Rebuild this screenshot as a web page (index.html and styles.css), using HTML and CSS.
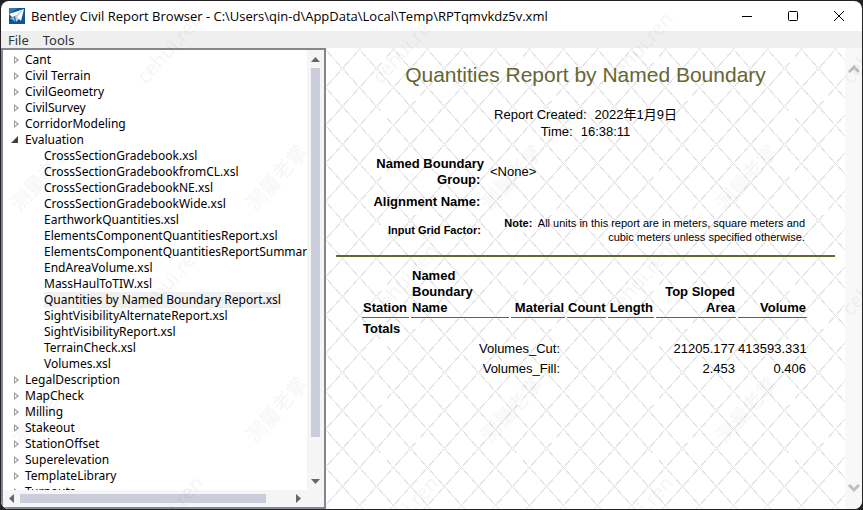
FILE: index.html
```
<!DOCTYPE html>
<html lang="en">
<head>
<meta charset="utf-8">
<title>Bentley Civil Report Browser</title>
<link rel="stylesheet" href="styles.css">
</head>
<body>
<div class="window">
  <header class="titlebar">
    <svg class="app-icon" viewBox="0 0 16 16" aria-hidden="true">
      <rect width="16" height="16" fill="#0d5596"/>
      <path d="M0 0h9L0 6z" fill="#2f7ab8"/>
      <path d="M15 1 0 6l3 3 4-1z" fill="#fff"/>
      <path d="M15 1 6 8l1 6 3-3z" fill="#b9d2e6"/>
      <path d="M15 1 8 9l4 4z" fill="#fff"/>
      <path d="M1 10l4-1 1 5-2-2z" fill="#9dc3df"/>
    </svg>
    <h1 class="caption">Bentley Civil Report Browser - C:\Users\qin-d\AppData\Local\Temp\RPTqmvkdz5v.xml</h1>
    <div class="controls">
      <button type="button" aria-label="Minimize"><svg viewBox="0 0 12 12"><path d="M1 6.500h10"/></svg></button>
      <button type="button" aria-label="Maximize"><svg viewBox="0 0 12 12"><rect x="1.500" y="1.500" width="9" height="9" rx="1"/></svg></button>
      <button type="button" aria-label="Close"><svg viewBox="0 0 12 12"><path d="M1 1l10 10M11 1 1 11"/></svg></button>
    </div>
  </header>
  <nav class="menubar">
    <button type="button">File</button>
    <button type="button">Tools</button>
  </nav>
  <div class="panes">
    <aside class="tree-pane">
      <div class="tree-view">
        <ul class="tree">
          <li><span class="twisty"></span>Cant</li>
          <li><span class="twisty"></span>Civil Terrain</li>
          <li><span class="twisty"></span>CivilGeometry</li>
          <li><span class="twisty"></span>CivilSurvey</li>
          <li><span class="twisty"></span>CorridorModeling</li>
          <li><span class="twisty open"></span>Evaluation
            <ul>
              <li>CrossSectionGradebook.xsl</li>
              <li>CrossSectionGradebookfromCL.xsl</li>
              <li>CrossSectionGradebookNE.xsl</li>
              <li>CrossSectionGradebookWide.xsl</li>
              <li>EarthworkQuantities.xsl</li>
              <li>ElementsComponentQuantitiesReport.xsl</li>
              <li>ElementsComponentQuantitiesReportSummary.xsl</li>
              <li>EndAreaVolume.xsl</li>
              <li>MassHaulToTIW.xsl</li>
              <li><span class="selected">Quantities by Named Boundary Report.xsl</span></li>
              <li>SightVisibilityAlternateReport.xsl</li>
              <li>SightVisibilityReport.xsl</li>
              <li>TerrainCheck.xsl</li>
              <li>Volumes.xsl</li>
            </ul>
          </li>
          <li><span class="twisty"></span>LegalDescription</li>
          <li><span class="twisty"></span>MapCheck</li>
          <li><span class="twisty"></span>Milling</li>
          <li><span class="twisty"></span>Stakeout</li>
          <li><span class="twisty"></span>StationOffset</li>
          <li><span class="twisty"></span>Superelevation</li>
          <li><span class="twisty"></span>TemplateLibrary</li>
          <li><span class="twisty"></span>Turnouts</li>
        </ul>
      </div>
      <div class="vbar">
        <svg viewBox="0 0 9 5"><path d="M0 5 4.500 0 9 5z"/></svg>
        <div class="track"><div class="thumb"></div></div>
        <svg viewBox="0 0 9 5"><path d="M0 0h9L4.500 5z"/></svg>
      </div>
      <div class="hbar">
        <svg viewBox="0 0 5 9"><path d="M5 0v9L0 4.500z"/></svg>
        <div class="track"><div class="thumb"></div></div>
        <svg viewBox="0 0 5 9"><path d="M0 0v9l5-4.500z"/></svg>
      </div>
    </aside>
    <main class="report-pane">
      <svg class="lattice" aria-hidden="true">
        <defs>
          <pattern id="cell" x="-1" y="1" width="34" height="38" patternUnits="userSpaceOnUse">
            <path d="M.5.5 34.500 38.500M34.500.5.5 38.500" fill="none" stroke="#e2e2e2" shape-rendering="crispEdges"/>
            <circle cx="17.500" cy="19.500" r="1.500" fill="#fff" stroke="#e2e2e2"/>
          </pattern>
          <pattern id="gaps" width="136" height="114" patternUnits="userSpaceOnUse">
            <path d="M53 7h8v8h-8zM86 45h8v8h-8zM53 63h8v8h-8z" fill="#fff"/>
          </pattern>
        </defs>
        <rect width="100%" height="100%" fill="url(#cell)"/>
        <rect width="100%" height="100%" fill="url(#gaps)"/>
      </svg>
      <article class="report">
        <h2>Quantities Report by Named Boundary</h2>
        <dl class="created">
          <div><dt>Report Created:</dt><dd>2022年1月9日</dd></div>
          <div><dt>Time:</dt><dd>16:38:11</dd></div>
        </dl>
        <dl class="facts">
          <dt>Named Boundary Group:&nbsp;</dt><dd>&lt;None&gt;</dd>
          <dt>Alignment Name:&nbsp;</dt><dd></dd>
          <dt class="small">Input Grid Factor:&nbsp;</dt>
          <dd class="note"><b>Note:</b> All units in this report are in meters, square meters and cubic meters unless specified otherwise.</dd>
        </dl>
        <hr>
        <table class="quantities">
          <colgroup><col class="c-station"><col class="c-name"><col class="c-material"><col class="c-count"><col class="c-length"><col class="c-area"><col class="c-volume"></colgroup>
          <thead>
            <tr><th class="left">Station</th><th class="left">Named<br>Boundary<br>Name</th><th>Material</th><th>Count</th><th>Length</th><th>Top Sloped Area</th><th>Volume</th></tr>
          </thead>
          <tbody>
            <tr><th class="left" colspan="7">Totals</th></tr>
            <tr><td class="item" colspan="3">Volumes_Cut:</td><td></td><td></td><td>21205.177</td><td>413593.331</td></tr>
            <tr><td class="item" colspan="3">Volumes_Fill:</td><td></td><td></td><td>2.453</td><td>0.406</td></tr>
          </tbody>
        </table>
      </article>
      <div class="page-bar">
        <svg viewBox="0 0 12 10"><path d="M1 8l5-5 5 5"/></svg>
        <svg viewBox="0 0 12 10"><path d="M1 2l5 5 5-5"/></svg>
      </div>
    </main>
  </div>
</div>
<svg class="watermark" aria-hidden="true">
  <defs>
    <pattern id="mark" width="235" height="232" patternUnits="userSpaceOnUse">
      <text transform="translate(146 85) rotate(-48)">cehui.ren</text>
      <text transform="translate(20 212) rotate(-48)">测量老掌</text>
    </pattern>
  </defs>
  <rect width="100%" height="100%" fill="url(#mark)"/>
</svg>
</body>
</html>
```
FILE: styles.css
```
* { box-sizing: border-box; }
html, body { height: 100%; margin: 0; }
body {
  padding: 1px;
  background: #242126;
  color: #000;
  font: 13px/16px "Noto Sans", "Noto Sans CJK SC", sans-serif;
  overflow: hidden;
}
button { border: 0; padding: 0; background: none; font: inherit; color: inherit; }
ul, dl, dd, h1, h2 { margin: 0; padding: 0; }
ul { list-style: none; }

.window {
  display: flex;
  flex-direction: column;
  height: 100%;
  border-radius: 8px;
  background: #fff;
  overflow: hidden;
}
.titlebar { display: flex; align-items: center; height: 30px; padding-left: 8px; }
.app-icon { width: 16px; height: 16px; }
.caption { flex: 1; margin-left: 6px; font-family: "Open Sans", "Noto Sans", sans-serif; font-size: 13px; font-weight: 400; white-space: nowrap; }
.controls { display: flex; height: 100%; }
.controls button { width: 46px; display: grid; place-items: center; }
.controls svg { width: 12px; height: 12px; fill: none; stroke: #000; }
.menubar { display: flex; gap: 14px; height: 17px; padding-left: 7px; background: #efefef; color: #333; }

.panes { flex: 1; display: flex; min-height: 0; }
.tree-pane {
  display: grid;
  grid-template: minmax(0, 1fr) 17px / minmax(0, 1fr) 17px;
  flex: 0 0 325px;
  border: 2px solid #828790;
  background: #f5f5f5;
}
.tree-view { overflow: hidden; background: #fff; padding-top: 2px; font-size: 12px; }
.tree li { padding-left: 22px; white-space: nowrap; }
.tree li li { padding-left: 19px; }
.twisty { float: left; width: 5px; height: 8px; margin: 4px 0 0 -11px; background: #999; clip-path: polygon(0 0, 100% 50%, 0 100%, 0 0, 1px 2px, 1px 6px, 3px 4px, 1px 2px); }
.twisty.open { width: 7px; height: 7px; margin-left: -14px; background: #404040; clip-path: polygon(100% 0, 100% 100%, 0 100%); }
.selected { display: inline-block; background: #f0f0f0; }

.vbar, .hbar { display: flex; align-items: center; justify-content: space-between; }
.vbar { flex-direction: column; padding: 7px 0 6px; gap: 6px; }
.hbar { padding: 0 6px; gap: 6px; }
.vbar svg { width: 9px; height: 5px; }
.hbar svg { width: 5px; height: 9px; }
.vbar path, .hbar path { fill: #666; }
.track { flex: 1; }
.thumb { background: #cccddb; }
.vbar .thumb { width: 9px; height: 91%; }
.hbar .thumb { height: 9px; width: 91%; }

.report-pane { position: relative; flex: 1; display: flex; min-width: 0; font-family: "Liberation Sans", "Noto Sans CJK SC", sans-serif; }
.lattice { position: absolute; inset: 0; width: 100%; height: 100%; }
.report { position: relative; flex: 1; padding: 14px 10px; min-width: 0; }
.report h2 { color: #666633; font-size: 21px; line-height: 26px; font-weight: 400; text-align: center; }
.created { margin-top: 18px; line-height: 17px; }
.created div { display: flex; justify-content: center; gap: 8px; }
.facts { display: grid; grid-template-columns: 148px 1fr; gap: 6px; align-items: center; margin-top: 16px; padding-right: 30px; }
.facts dt { font-weight: 700; text-align: right; }
.facts .small, .note { font-size: 11px; }
.note { line-height: 14px; text-align: right; }
.note b { margin-right: 3px; }
.report hr { height: 2px; margin: 11px 0 8px; border: 0; background: #666633; }
.quantities { width: 449px; margin-left: 24px; border-collapse: separate; border-spacing: 2px; table-layout: fixed; }
.quantities th, .quantities td { padding: 1px; text-align: right; vertical-align: bottom; }
.quantities td { padding-left: 0; }
.quantities thead th { border-bottom: 1px solid #666633; }
.quantities .left { text-align: left; }
.quantities .item { padding-right: 5px; }
.c-station { width: 47px; }
.c-name { width: 98px; }
.c-material { width: 54px; }
.c-count { width: 39px; }
.c-length { width: 46px; }
.c-area { width: 80px; }
.c-volume { width: 69px; }
.page-bar { position: relative; flex: 0 0 17px; display: flex; flex-direction: column; align-items: center; justify-content: space-between; padding: 16px 0; background: #f8f8f8; }
.page-bar svg { width: 12px; height: 10px; fill: none; stroke: #bfbfbf; stroke-width: 3; }

.watermark { position: absolute; inset: 0; width: 100%; height: 100%; pointer-events: none; }
.watermark text { font: 20px "Noto Sans", "Noto Sans CJK SC", sans-serif; fill: #000; fill-opacity: .04; }
```
